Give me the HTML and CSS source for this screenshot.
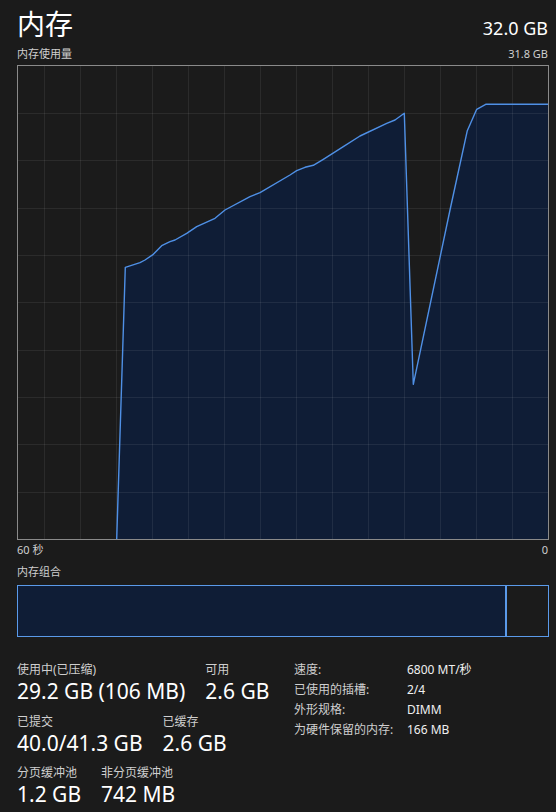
FILE: index.html
```html
<!DOCTYPE html>
<html lang="zh-CN">
<head>
  <meta charset="UTF-8" />
  <meta name="viewport" content="width=device-width, initial-scale=1.0"/>
  <title>内存</title>
  <link rel="stylesheet" href="styles.css">
</head>
<body>
  <div class="painel">
    <div class="cabecalho">
      <h1 class="titulo">内存</h1>
      <span class="total">32.0 GB</span>
    </div>
    <div class="eixo">
      <span>内存使用量</span>
      <span>31.8 GB</span>
    </div>

    <div class="grafico">
      <svg width="532" height="475" viewBox="0 0 532 475">
        <!-- area de uso -->
        <path class="area" d="M99.7 474 L108.3 202.3 L123 197.7 L128 195 L136.3 189.3 L144.7 180.7 L153 176.7 L158 175 L169.7 168.3 L179.7 161.7 L198 153.3 L208 145 L233 131.7 L243 127.7 L273 110 L279.7 105.7 L288 102.3 L296.3 100.3 L306.3 94.3 L326.3 81.7 L343 71 L369.7 58.3 L378 55 L387.3 48.3 L396.3 319.3 L433 145 L450.3 65.7 L459.7 44.3 L468.7 39.3 L531 39.3 L531 474 Z"/>
        <!-- grade -->
        <g class="grade">
          <line x1="27.5" y1="0" x2="27.5" y2="475"/>
          <line x1="63.5" y1="0" x2="63.5" y2="475"/>
          <line x1="99.5" y1="0" x2="99.5" y2="475"/>
          <line x1="135.5" y1="0" x2="135.5" y2="475"/>
          <line x1="171.5" y1="0" x2="171.5" y2="475"/>
          <line x1="207.5" y1="0" x2="207.5" y2="475"/>
          <line x1="243.5" y1="0" x2="243.5" y2="475"/>
          <line x1="279.5" y1="0" x2="279.5" y2="475"/>
          <line x1="315.5" y1="0" x2="315.5" y2="475"/>
          <line x1="351.5" y1="0" x2="351.5" y2="475"/>
          <line x1="387.5" y1="0" x2="387.5" y2="475"/>
          <line x1="423.5" y1="0" x2="423.5" y2="475"/>
          <line x1="459.5" y1="0" x2="459.5" y2="475"/>
          <line x1="495.5" y1="0" x2="495.5" y2="475"/>
          <line x1="0" y1="48.5" x2="532" y2="48.5"/>
          <line x1="0" y1="95.5" x2="532" y2="95.5"/>
          <line x1="0" y1="143.5" x2="532" y2="143.5"/>
          <line x1="0" y1="190.5" x2="532" y2="190.5"/>
          <line x1="0" y1="237.5" x2="532" y2="237.5"/>
          <line x1="0" y1="285.5" x2="532" y2="285.5"/>
          <line x1="0" y1="332.5" x2="532" y2="332.5"/>
          <line x1="0" y1="379.5" x2="532" y2="379.5"/>
          <line x1="0" y1="427.5" x2="532" y2="427.5"/>
        </g>
        <polyline class="linha" points="99.7,474 108.3,202.3 123,197.7 128,195 136.3,189.3 144.7,180.7 153,176.7 158,175 169.7,168.3 179.7,161.7 198,153.3 208,145 233,131.7 243,127.7 273,110 279.7,105.7 288,102.3 296.3,100.3 306.3,94.3 326.3,81.7 343,71 369.7,58.3 378,55 387.3,48.3 396.3,319.3 433,145 450.3,65.7 459.7,44.3 468.7,39.3 531,39.3"/>
        <rect class="borda" x="0.5" y="0.5" width="531" height="474"/>
      </svg>
    </div>

    <div class="eixo tempo">
      <span>60 秒</span>
      <span>0</span>
    </div>

    <div class="rotulo-secao">内存组合</div>
    <div class="composicao">
      <div class="comp-usado"></div>
    </div>

    <div class="estatisticas">
      <div class="estat-principal">
        <div class="estat-linha">
          <div class="estat">
            <div class="estat-rotulo">使用中(已压缩)</div>
            <div class="estat-valor">29.2 GB (106 MB)</div>
          </div>
          <div class="estat">
            <div class="estat-rotulo">可用</div>
            <div class="estat-valor">2.6 GB</div>
          </div>
        </div>
        <div class="estat-linha">
          <div class="estat">
            <div class="estat-rotulo">已提交</div>
            <div class="estat-valor">40.0/41.3 GB</div>
          </div>
          <div class="estat">
            <div class="estat-rotulo">已缓存</div>
            <div class="estat-valor">2.6 GB</div>
          </div>
        </div>
        <div class="estat-linha">
          <div class="estat">
            <div class="estat-rotulo">分页缓冲池</div>
            <div class="estat-valor">1.2 GB</div>
          </div>
          <div class="estat">
            <div class="estat-rotulo">非分页缓冲池</div>
            <div class="estat-valor">742 MB</div>
          </div>
        </div>
      </div>

      <div class="especificacoes">
        <span class="espec-rotulo">速度:</span>
        <span class="espec-valor">6800 MT/秒</span>
        <span class="espec-rotulo">已使用的插槽:</span>
        <span class="espec-valor">2/4</span>
        <span class="espec-rotulo">外形规格:</span>
        <span class="espec-valor">DIMM</span>
        <span class="espec-rotulo">为硬件保留的内存:</span>
        <span class="espec-valor">166 MB</span>
      </div>
    </div>
  </div>
</body>
</html>
```

FILE: styles.css
```css
* {
  box-sizing: border-box;
}

body {
  margin: 0;
  font-family: "Noto Sans", "Noto Sans CJK SC", sans-serif;
  background: #1b1b1b;
  color: #fff;
}

.painel {
  padding: 6px 7px 0 17px;
}

.cabecalho {
  display: flex;
  justify-content: space-between;
  align-items: baseline;
}

.titulo {
  margin: 0;
  font-size: 28px;
  font-weight: normal;
  line-height: 36px;
}

.total {
  font-size: 18px;
  margin-right: 1px;
}

.eixo {
  display: flex;
  justify-content: space-between;
  margin-top: 4px;
  padding-right: 1px;
  font-size: 11px;
  line-height: 16px;
  color: #cfcfcf;
}

.grafico {
  margin-top: 3px;
}

.grafico svg {
  display: block;
}

.area {
  fill: #0f1d36;
}

.grade line {
  stroke: rgba(255, 255, 255, 0.075);
  stroke-width: 1;
}

.linha {
  fill: none;
  stroke: #4f90e6;
  stroke-width: 1.4;
  stroke-linejoin: round;
}

.borda {
  fill: none;
  stroke: #8a8a8a;
  stroke-width: 1;
}

.tempo {
  margin-top: 2px;
}

.rotulo-secao {
  margin-top: 6px;
  font-size: 11px;
  line-height: 16px;
  color: #cfcfcf;
}

.composicao {
  display: flex;
  margin-top: 5px;
  height: 52px;
  border: 1px solid #5a9aea;
}

.comp-usado {
  width: 489px;
  background: #0f1d36;
  border-right: 2px solid #5a9aea;
}

.estatisticas {
  display: flex;
  margin-top: 23px;
}

.estat-principal {
  width: 277px;
}

.estat-linha {
  display: flex;
  gap: 20px;
  margin-bottom: 9.5px;
}

.estat-rotulo {
  font-size: 12px;
  line-height: 20px;
  color: #cfcfcf;
}

.estat-valor {
  font-size: 21px;
  line-height: 22px;
  white-space: nowrap;
}

.especificacoes {
  display: grid;
  grid-template-columns: 113px auto;
  align-content: start;
  font-size: 12px;
  line-height: 20px;
}

.espec-rotulo {
  color: #cfcfcf;
}

.espec-valor {
  color: #f0f0f0;
}
```
